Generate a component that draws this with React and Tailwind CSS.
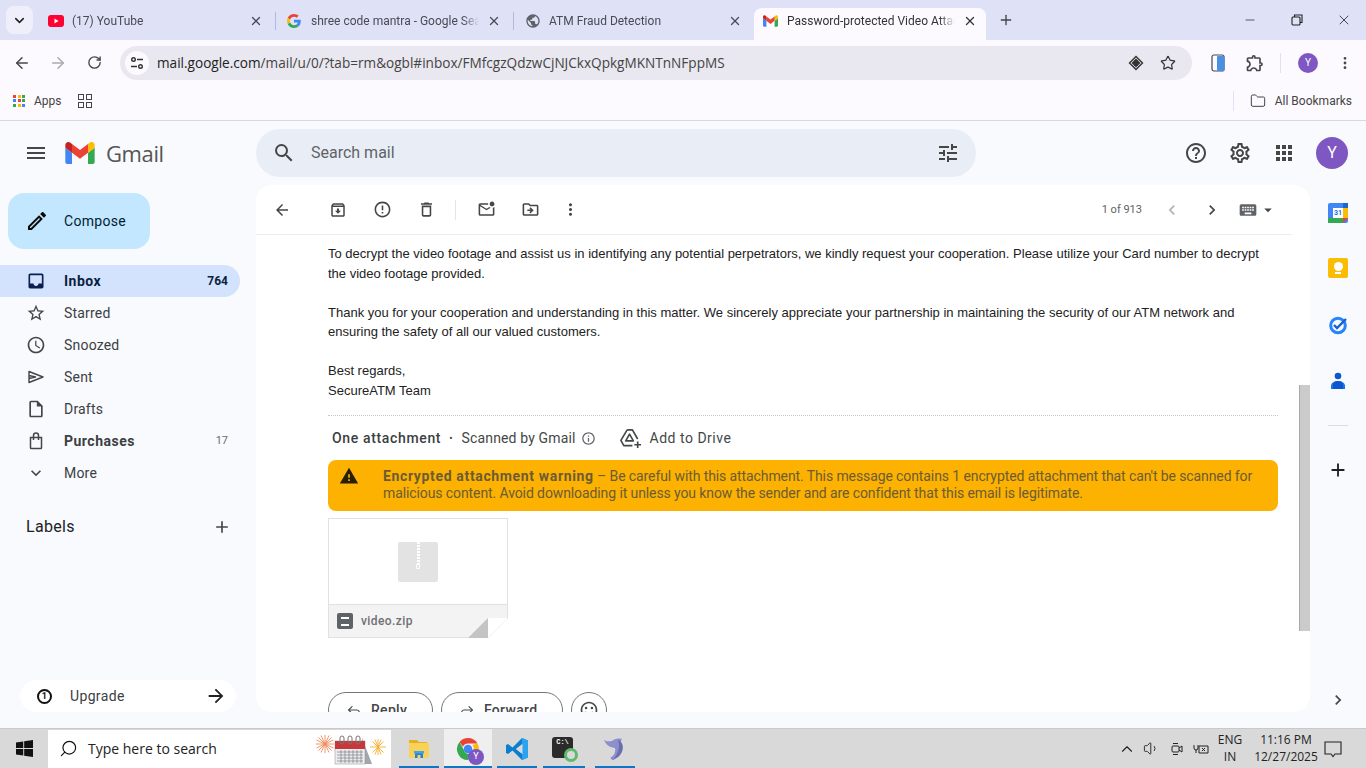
import React from 'react';
import { ChevronDown, X, Plus, ArrowLeft, ArrowRight, RotateCw, Star, MoreVertical, Minus, Folder, Search, ChevronUp, Volume1, Reply, Forward } from 'lucide-react';
import {
  MdMenu, MdSearch, MdTune, MdHelpOutline, MdOutlineSettings, MdApps, MdOutlineCreate, MdInbox, MdStarBorder,
  MdOutlineSchedule, MdOutlineInsertDriveFile, MdExpandMore, MdAdd, MdArrowForward, MdArrowBack,
  MdOutlineArchive, MdErrorOutline, MdOutlineDelete, MdOutlineMarkEmailUnread, MdOutlineDriveFileMove, MdMoreVert,
  MdChevronLeft, MdChevronRight, MdKeyboard, MdArrowDropDown, MdInfoOutline, MdWarning,
  MdOutlineSentimentSatisfied, MdPublic, MdOutlineExtension,
} from 'react-icons/md';

const GmailLogo = ({ className }) => (
  <svg viewBox="52 42 88 66" className={className}>
    <path fill="#4285f4" d="M58 108h14V74L52 59v43c0 3.32 2.69 6 6 6" />
    <path fill="#34a853" d="M120 108h14c3.32 0 6-2.69 6-6V59l-20 15" />
    <path fill="#fbbc04" d="M120 48v26l20-15v-8c0-7.42-8.47-11.65-14.4-7.2" />
    <path fill="#ea4335" d="M72 74V48l24 18 24-18v26L96 92" />
    <path fill="#c5221f" d="M52 51v8l20 15V48l-5.6-4.2c-5.94-4.45-14.4-.22-14.4 7.2" />
  </svg>
);

const GoogleG = () => (
  <svg viewBox="0 0 48 48" className="h-[14px] w-[14px]">
    <path fill="#EA4335" d="M24 9.5c3.54 0 6.71 1.22 9.21 3.6l6.85-6.85C35.9 2.38 30.47 0 24 0 14.62 0 6.51 5.38 2.56 13.22l7.98 6.19C12.43 13.72 17.74 9.5 24 9.5z" />
    <path fill="#4285F4" d="M46.98 24.55c0-1.57-.15-3.09-.38-4.55H24v9.02h12.94c-.58 2.96-2.26 5.48-4.78 7.18l7.73 6c4.51-4.18 7.09-10.36 7.09-17.65z" />
    <path fill="#FBBC05" d="M10.53 28.59c-.48-1.45-.76-2.99-.76-4.59s.27-3.14.76-4.59l-7.98-6.19C.92 16.46 0 20.12 0 24c0 3.88.92 7.54 2.56 10.78l7.97-6.19z" />
    <path fill="#34A853" d="M24 48c6.48 0 11.93-2.13 15.89-5.81l-7.73-6c-2.15 1.45-4.92 2.3-8.16 2.3-6.26 0-11.57-4.22-13.47-9.91l-7.98 6.19C6.51 42.62 14.62 48 24 48z" />
  </svg>
);

const YoutubeIcon = () => (
  <svg viewBox="0 0 16 16" className="h-4 w-4">
    <rect x="0" y="2" width="16" height="12" rx="3" fill="#ff0033" />
    <path d="M6.5 5.5v5l4-2.500z" fill="#fff" />
  </svg>
);

const ChromeTab = ({ icon, title, width, active, sep }) => (
  <div className={`relative flex h-8 shrink-0 items-center pb-[7px] ${width} ${active ? 'rounded-t-lg bg-[#fcfaff] pl-[9px] pr-[9px] text-[#333]' : 'pl-3 pr-3 text-[#4a4a55]'}`}>
    <span className="flex w-[24px] shrink-0 items-center">{icon}</span>
    <span className="flex-1 overflow-hidden whitespace-nowrap text-[12px] [mask-image:linear-gradient(to_left,transparent,black_16px)]">{title}</span>
    <X size={14} strokeWidth={2.2} className="ml-2 shrink-0" />
    {sep && <span className="absolute right-[-1px] top-1 h-[18px] w-px bg-[#b4b7e0]" />}
  </div>
);

const NavRow = ({ icon, label, count, active, bold, muted }) => (
  <div className={`flex h-8 w-[240px] items-center rounded-r-full pl-[26px] pr-3 text-[14px] ${active ? 'bg-[#d3e3fd] text-[#0b1f3f]' : 'text-[#3c4043]'}`}>
    <span className="flex w-[38px] shrink-0 items-center">{icon}</span>
    <span className={bold ? 'font-bold tracking-[0.5px]' : 'tracking-[0.2px]'}>{label}</span>
    <span className={`ml-auto ${muted ? 'text-[11px] text-[#6a6d70]' : 'text-[12px] font-bold'}`}>{count}</span>
  </div>
);

const ToolIcon = ({ children, className = '' }) => (
  <span className={`flex h-5 w-5 shrink-0 items-center justify-center text-[#444746] ${className}`}>{children}</span>
);

const WindowsLogo = () => (
  <svg viewBox="0 0 16 16" className="h-[17px] w-[17px]" fill="#111">
    <path d="M0 2.300 6.800 1.300V7.500H0zM7.700 1.200 16 0V7.500H7.700zM0 8.400H6.800V14.700L0 13.700zM7.700 8.400H16V16L7.700 14.800z" />
  </svg>
);

const BagIcon = () => (
  <svg viewBox="0 0 20 20" className="h-5 w-5" fill="none" stroke="#444746" strokeWidth="1.500">
    <path d="M4.500 6.500h11v10.200a.8.8 0 0 1-.8.8H5.300a.8.8 0 0 1-.8-.8z" />
    <path d="M7.500 9V4.500a2.500 2.500 0 0 1 5 0V9" />
  </svg>
);

const SentIcon = () => (
  <svg viewBox="0 0 20 20" className="h-5 w-5" fill="none" stroke="#444746" strokeWidth="1.400" strokeLinejoin="round">
    <path d="M3 4.500 17 10 3 15.500zM3 8.500 9.500 10 3 11.500" />
  </svg>
);

const DriveAddIcon = () => (
  <svg viewBox="0 0 24 24" className="ml-[23px] h-[23px] w-[23px] shrink-0" fill="none" stroke="#444746" strokeWidth="1.700" strokeLinejoin="round">
    <path d="M8.500 3h5.500l5.500 9.500M8.500 3 2 14l3 5.500h9" />
    <path d="M11 7.500 7 14.500h8z" />
    <path d="M19.500 15v7M16 18.500h7" />
  </svg>
);

const CalendarTask = () => (
  <svg viewBox="0 0 76 38" className="h-[38px] w-[76px]">
    <g stroke="#f08a5d" strokeWidth="0.9">
      <path d="M10 5v18M1 14h18M3.500 7.500l13 13M16.500 7.500l-13 13M6 5.500l8 17M14 5.500l-8 17M1.500 10l17 8M18.500 10l-17 8" />
    </g>
    <g stroke="#f5b030" strokeWidth="0.9">
      <path d="M63 9v16M55 17h16M57.500 11.500l11 11M68.500 11.500l-11 11M60 9.500l6 15M66 9.500l-6 15" />
    </g>
    <path d="M47 8l10 26H45z" fill="#a4a6ad" />
    <rect x="20" y="11" width="30" height="23" fill="#ecedf0" stroke="#8f9095" strokeWidth="0.5" />
    <rect x="20" y="11" width="30" height="8" fill="#c8383a" />
    <path d="M22 22h26M22 25h26M22 28h26M22 31h26M26 20v13M30 20v13M34 20v13M38 20v13M42 20v13M46 20v13" stroke="#6e6f75" strokeWidth="0.6" />
    <g fill="none" stroke="#777" strokeWidth="1">
      <rect x="25" y="6" width="4" height="8" rx="2" /><rect x="33" y="6" width="4" height="8" rx="2" /><rect x="41" y="6" width="4" height="8" rx="2" />
    </g>
  </svg>
);

const ExplorerIcon = () => (
  <svg viewBox="0 0 24 24" className="h-6 w-6">
    <path d="M2 3h8l2 2h8v4H2z" fill="#e8b021" />
    <rect x="2" y="6" width="20" height="15" fill="#f9d25c" />
    <path d="M8 21v-6h8v6h-2.500v-3h-3v3z" fill="#2c7fd0" />
    <rect x="7" y="14" width="10" height="2.500" fill="#3fa4e8" />
  </svg>
);

const ChromeIcon = () => (
  <span className="relative flex h-6 w-6 items-center justify-center">
    <svg viewBox="0 0 24 24" className="h-6 w-6">
      <path d="M12 1a11 11 0 0 1 9.500 5.500H12a5.500 5.500 0 0 0-5 3.200L3.500 5A11 11 0 0 1 12 1z" fill="#ea4335" />
      <path d="M21.500 6.500A11 11 0 0 1 12 23l4.700-8.200A5.500 5.500 0 0 0 16.500 8z" fill="#fbbc04" />
      <path d="M12 23A11 11 0 0 1 3.500 5l4.700 8.500a5.500 5.500 0 0 0 6 3.500z" fill="#34a853" />
      <circle cx="12" cy="12" r="4.200" fill="#4285f4" />
    </svg>
    <span className="absolute bottom-[-4px] right-[-4px] flex h-4 w-4 items-center justify-center rounded-full bg-[#7e57c2] text-[9px] text-white">Y</span>
  </span>
);

const VsCodeIcon = () => (
  <svg viewBox="0 0 24 24" className="h-6 w-6">
    <path d="M17 1 7.500 10.500 3 7 1 8v8l2 1 4.500-3.500L17 23l6-2.500v-17zM17.500 7v10L11 12z" fill="#0a7fd0" />
    <path d="M17 1l6 2.500v17L17 23z" fill="#2ba3ee" />
    <path d="M17.500 7v10L11 12z" fill="#d9d9d9" />
  </svg>
);

const CmdIcon = () => (
  <span className="relative flex h-6 w-6">
    <span className="flex h-[21px] w-[21px] items-start justify-center rounded-[3px] bg-[#2b2b2b] pt-[2px] font-['Liberation_Mono',monospace] text-[7px] font-bold leading-none text-white">C:\</span>
    <span className="absolute bottom-[-1px] right-[-2px] h-[14px] w-[14px] rounded-full border-[3px] border-[#5fba6a] bg-[#d9d9d9]" />
  </span>
);

const DolphinIcon = () => (
  <svg viewBox="0 0 24 24" className="h-6 w-6">
    <path d="M1 3c3 2 5 1 8 1 2-2 6-3 10-2-1 1-1 2-1 3 3 4 2 11-3 15l-5 3c-1 0-3-1-2-3 3-1 5-5 4-9-4-1-8-1-11-8z" fill="#8c8fc9" />
    <path d="M15 3c1 0 2 1 3 2 3 4 2 11-3 15l-5 3c4-5 8-12 5-20z" fill="#6a6eb0" />
  </svg>
);

function TaskIcon({ children, bar, active }) {
  return (
    <div className={`relative flex h-10 items-center justify-center ${bar} ${active ? 'bg-[#efefef]' : ''}`}>
      {children}
      <span className="absolute bottom-0 left-0 right-0 h-[3px] bg-[#0a78c8]" />
    </div>
  );
}

function Sidebar() {
  return (
    <aside className="flex w-[256px] shrink-0 flex-col">
      <div className="flex h-[64px] items-center pl-[24px]">
        <MdMenu size={24} className="text-[#444746]" />
        <GmailLogo className="ml-[17px] h-[22px] w-[30px]" />
        <span className="ml-[11px] font-['Open_Sans',sans-serif] text-[22px] leading-none tracking-[-0.4px] text-[#555]">Gmail</span>
      </div>
      <div className="ml-2 mt-2 flex h-14 w-[142px] items-center rounded-2xl bg-[#c2e7ff] pl-[17px] text-[14px] tracking-[0.3px] text-[#001d35]">
        <MdOutlineCreate size={24} className="text-[#0a0a0a]" />
        <span className="ml-[15px]">Compose</span>
      </div>
      <div className="mt-4 flex flex-col">
        <NavRow active bold label="Inbox" count="764" icon={<MdInbox size={20} className="text-[#0b1f4f]" />} />
        <NavRow label="Starred" icon={<MdStarBorder size={20} className="text-[#444746]" />} />
        <NavRow label="Snoozed" icon={<MdOutlineSchedule size={20} className="text-[#444746]" />} />
        <NavRow label="Sent" icon={<SentIcon />} />
        <NavRow label="Drafts" icon={<MdOutlineInsertDriveFile size={20} className="text-[#444746]" />} />
        <NavRow bold muted label="Purchases" count="17" icon={<BagIcon />} />
        <NavRow label="More" icon={<MdExpandMore size={20} className="text-[#444746]" />} />
      </div>
      <div className="mt-[22px] flex h-8 w-[240px] items-center justify-between pl-[26px] pr-[8px]">
        <span className="text-[16px] tracking-[0.3px] text-[#202124]">Labels</span>
        <MdAdd size={20} className="text-[#444746]" />
      </div>
      <div className="mb-4 ml-5 mt-auto flex h-8 w-[216px] items-center rounded-full bg-white pl-[17px] pr-[9px] text-[14px] tracking-[0.35px] text-[#3c4043]">
        <span className="flex h-[15px] w-[15px] items-center justify-center rounded-full border-2 border-[#111] text-[9px] font-bold leading-none text-[#111]">1</span>
        <span className="ml-[18px]">Upgrade</span>
        <MdArrowForward size={22} className="ml-auto text-[#222]" />
      </div>
    </aside>
  );
}

function MailCard() {
  return (
    <main className="relative mb-4 flex h-[527px] w-[1054px] shrink-0 flex-col overflow-hidden rounded-2xl bg-white">
      <div className="mr-[18px] flex h-[50px] shrink-0 items-center border-b border-[#eceded] pl-4 text-[#444746]">
        <ToolIcon><MdArrowBack size={18} /></ToolIcon>
        <ToolIcon className="ml-[36px]"><MdOutlineArchive size={18} /></ToolIcon>
        <ToolIcon className="ml-6"><MdErrorOutline size={19} /></ToolIcon>
        <ToolIcon className="ml-6"><MdOutlineDelete size={19} /></ToolIcon>
        <span className="ml-[19px] h-5 w-px bg-[#e4e5e5]" />
        <ToolIcon className="ml-[20px]"><MdOutlineMarkEmailUnread size={19} /></ToolIcon>
        <ToolIcon className="ml-6"><MdOutlineDriveFileMove size={19} /></ToolIcon>
        <ToolIcon className="ml-5"><MdMoreVert size={19} /></ToolIcon>
        <span className="ml-auto pt-[1px] text-[11px] text-[#5f6368]">1 of 913</span>
        <MdChevronLeft size={20} className="ml-5 text-[#b0b2b4]" />
        <MdChevronRight size={20} className="ml-5 text-[#444746]" />
        <MdKeyboard size={20} className="ml-4 text-[#5f6368]" />
        <MdArrowDropDown size={18} className="ml-[1px] mr-[15px] text-[#444746]" />
      </div>
      <div className="mr-[32px] min-h-0 flex-1 overflow-hidden pl-[72px] pt-[9px]">
        <div className="font-['Liberation_Sans',sans-serif] text-[13px] leading-[19.5px] text-[#222]">
          <p>To decrypt the video footage and assist us in identifying any potential perpetrators, we kindly request your cooperation. Please utilize your Card number to decrypt<br />the video footage provided.</p>
          <p className="mt-[19.5px]">Thank you for your cooperation and understanding in this matter. We sincerely appreciate your partnership in maintaining the security of our ATM network and<br />ensuring the safety of all our valued customers.</p>
          <p className="mt-[19.5px]">Best regards,<br />SecureATM Team</p>
        </div>
        <div className="mt-[15px] border-t border-dotted border-[#c4c7c5] pl-1 pt-[12px]">
          <div className="flex h-5 items-center text-[14px] text-[#444746]">
            <span className="font-medium tracking-[0.65px] text-[#3c4043]">One attachment</span>
            <span className="ml-[8px] mr-[9px] text-[10px]">•</span>
            <span className="tracking-[0.15px]">Scanned by Gmail</span>
            <MdInfoOutline size={15} className="ml-[5px] text-[#5f6368]" />
            <DriveAddIcon />
            <span className="ml-[8px] tracking-[0.5px]">Add to Drive</span>
          </div>
        </div>
        <div className="mt-[12px] flex h-[51px] items-center rounded-lg bg-[#fdb100] pb-[2px] pl-[11px] text-[14px] leading-[17px] tracking-[-0.1px] text-[#6b5c36]">
          <MdWarning size={20} className="mt-[6px] shrink-0 self-start text-[#2a1e00]" />
          <p className="ml-[24px]"><span className="font-bold tracking-[0.65px]">Encrypted attachment warning</span> – Be careful with this attachment. This message contains 1 encrypted attachment that can't be scanned for<br />malicious content. Avoid downloading it unless you know the sender and are confident that this email is legitimate.</p>
        </div>
        <div className="relative mt-[7px] flex h-[120px] w-[180px] flex-col border border-[#e1e1e1]">
          <div className="flex flex-1 items-center justify-center bg-white">
            <div className="flex h-10 w-10 flex-col items-center rounded-[2px] bg-[#e3e3e3]">
              <span className="h-[22px] w-[3px] bg-[repeating-linear-gradient(to_bottom,#fff_0,#fff_2px,transparent_2px,transparent_3px)]" />
              <span className="h-[5px] w-[4px] rounded-[1px] border border-white" />
            </div>
          </div>
          <div className="flex h-[33px] items-center border-t border-[#e1e1e1] bg-[#f3f3f3] pl-2">
            <span className="flex h-4 w-4 items-center justify-center rounded-[2px] bg-[#5f6368]">
              <span className="h-[9px] w-2 border-y-2 border-white" />
            </span>
            <span className="ml-2 text-[12px] font-medium tracking-[0.4px] text-[#6f7175]">video.zip</span>
          </div>
          <svg viewBox="0 0 40 20" className="absolute bottom-[-1px] right-[-1px] h-5 w-10">
            <path d="M0 20 20 0V20z" fill="#c4c4c4" />
            <path d="M20 0H40V20H20z" fill="#fff" />
            <path d="M40 0 20 20" stroke="#ececec" strokeWidth="0.7" />
          </svg>
        </div>
        <div className="mt-[54px] flex gap-2">
          <div className="flex h-9 w-[105px] items-center gap-[9px] rounded-full border border-[#747775] pl-[17px] text-[14px] font-medium tracking-[0.3px] text-[#444746]"><Reply size={16} strokeWidth={1.6} />Reply</div>
          <div className="flex h-9 w-[122px] items-center gap-[9px] rounded-full border border-[#747775] pl-[17px] text-[14px] font-medium tracking-[0.3px] text-[#444746]"><Forward size={16} strokeWidth={1.6} />Forward</div>
          <div className="flex h-9 w-9 items-center justify-center rounded-full border border-[#747775] text-[#444746]"><MdOutlineSentimentSatisfied size={20} /></div>
        </div>
      </div>
      {/* scrollbar thumb sits over the mail body */}
      <div className="absolute right-0 top-[200px] h-[246px] w-[11px] border-l border-[#a8a8a8] bg-[#cbcbcb]" />
    </main>
  );
}

function RightRail() {
  return (
    <aside className="flex w-[56px] shrink-0 flex-col items-center pb-[18px] pt-[18px]">
      <div className="relative h-5 w-5">
        <svg viewBox="0 0 20 20" className="h-5 w-5">
          <rect width="20" height="20" rx="2" fill="#4285f4" />
          <rect x="15" y="0" width="5" height="5" fill="#1967d2" />
          <rect x="15" y="5" width="5" height="10" fill="#fbbc04" />
          <rect x="0" y="15" width="15" height="5" fill="#34a853" />
          <path d="M15 15h5l-5 5z" fill="#ea4335" />
          <rect x="5" y="5" width="10" height="10" fill="#fff" />
        </svg>
        <span className="absolute inset-x-0 top-[5px] text-center text-[7px] font-bold leading-[10px] text-[#1a73e8]">31</span>
      </div>
      <div className="mt-[35px] flex h-5 w-5 flex-col items-center justify-center rounded-[2px] bg-[#fbbc04]">
        <span className="h-[9px] w-[9px] rounded-full bg-white" />
        <span className="mt-[1px] h-[2px] w-[6px] bg-white" />
      </div>
      <svg viewBox="0 0 20 20" className="mt-[37px] h-5 w-5">
        <circle cx="10" cy="10.500" r="7.300" fill="none" stroke="#2684fc" strokeWidth="3" />
        <path d="M6 10l3 3 9-9" fill="none" stroke="#1a5fd0" strokeWidth="2.400" />
      </svg>
      <svg viewBox="0 0 20 20" className="mt-[36px] h-5 w-5">
        <circle cx="10" cy="5" r="3.300" fill="#0b57d0" />
        <path d="M3 18v-3c0-3 3-5 7-5s7 2 7 5v3z" fill="#1a73e8" />
        <path d="M5 18v-4c0-2 2-4 5-4s5 2 5 4v4z" fill="#0b57d0" />
      </svg>
      <span className="mt-[34px] h-px w-5 bg-[#dadce0]" />
      <MdAdd size={22} className="mt-[33px] text-[#1f1f1f]" />
      <MdChevronRight size={20} className="mt-auto text-[#444746]" />
    </aside>
  );
}

function Taskbar() {
  return (
    <footer className="flex h-10 shrink-0 items-center border-t border-[#c9c9c9] bg-[#d9d9d9] text-[#222]">
      <div className="flex h-10 w-[48px] items-center justify-center"><WindowsLogo /></div>
      <div className="flex h-[38px] w-[343px] items-center bg-white pl-[11px]">
        <Search size={19} strokeWidth={1.5} className="-scale-x-100 text-[#111]" />
        <span className="ml-[10px] font-['Open_Sans',sans-serif] text-[14px] text-[#222]">Type here to search</span>
        <span className="ml-auto"><CalendarTask /></span>
      </div>
      <div className="ml-2 flex items-center">
        <TaskIcon bar="w-[40px]"><ExplorerIcon /></TaskIcon>
        <TaskIcon active bar="ml-[5px] w-[48px]"><ChromeIcon /></TaskIcon>
        <TaskIcon bar="ml-[5px] w-[40px]"><VsCodeIcon /></TaskIcon>
        <TaskIcon bar="ml-[6px] w-[42px]"><CmdIcon /></TaskIcon>
        <TaskIcon bar="ml-[10px] w-[40px]"><DolphinIcon /></TaskIcon>
      </div>
      <div className="ml-auto flex items-center font-['Open_Sans',sans-serif] text-[12px] leading-[17px] text-[#222]">
        <ChevronUp size={18} strokeWidth={1.5} />
        <Volume1 size={17} strokeWidth={1.3} className="ml-[7px]" />
        <svg viewBox="0 0 16 16" className="ml-[9px] h-4 w-4" fill="none" stroke="#222" strokeWidth="1">
          <rect x="3" y="5" width="7" height="6" rx="1" /><path d="M10 7l3-2v6l-3-2M4 2.500h5M4 13.500h5" />
        </svg>
        <svg viewBox="0 0 16 16" className="ml-[8px] h-4 w-4" fill="none" stroke="#222" strokeWidth="1">
          <path d="M1 4v3a2 2 0 0 0 4 0V4M3 9v3M6 5h9v7H6zM9 7l3 3M12 7l-3 3" />
        </svg>
        <div className="mb-[2px] ml-[5px] flex w-[32px] flex-col items-center"><span>ENG</span><span>IN</span></div>
        <div className="mb-[2px] ml-[5px] flex w-[70px] flex-col items-center"><span>11:16 PM</span><span>12/27/2025</span></div>
        <svg viewBox="0 0 18 18" className="ml-[3px] mr-[24px] h-[18px] w-[18px]" fill="none" stroke="#222" strokeWidth="1.100">
          <path d="M1 2h16v12H11l-2 2.500L7 14H1z" />
        </svg>
      </div>
    </footer>
  );
}

export default function App() {
  return (
    <div className="flex h-[768px] w-[1366px] flex-col overflow-hidden bg-[#f8fafd] font-['Roboto',sans-serif]">
      {/* tab strip */}
      <div className="flex h-10 shrink-0 items-end bg-[#dfe1f7] pl-[6px]">
        <div className="mr-[3px] flex h-7 w-[27px] items-center justify-center self-center rounded-lg bg-[#eeeffb]">
          <ChevronDown size={15} strokeWidth={2.5} className="text-[#222]" />
        </div>
        <ChromeTab width="w-[239px]" sep title="(17) YouTube" icon={<YoutubeIcon />} />
        <ChromeTab width="w-[238px]" sep title="shree code mantra - Google Search" icon={<GoogleG />} />
        <ChromeTab width="w-[241px]" title="ATM Fraud Detection" icon={<MdPublic size={16} className="text-[#5f6368]" />} />
        <ChromeTab width="w-[232px]" active title="Password-protected Video Attachment" icon={<GmailLogo className="h-[12px] w-[15px]" />} />
        <Plus size={16} strokeWidth={2} className="mb-[12px] ml-[12px] text-[#444]" />
        <div className="mb-[12px] ml-auto flex items-center text-[#222]">
          <Minus size={14} strokeWidth={1.2} />
          <svg viewBox="0 0 12 12" className="ml-[34px] h-3 w-3" fill="none" stroke="#222" strokeWidth="1.100">
            <rect x="1" y="3" width="8" height="8" rx="1" /><path d="M3.500 3V1h7.500v7.500H9" />
          </svg>
          <X size={16} strokeWidth={1.2} className="ml-[33px] mr-[14px]" />
        </div>
      </div>
      {/* toolbar */}
      <div className="flex h-[45px] shrink-0 items-center bg-[#fcfaff] pl-[13px] pr-[12px] text-[#47464f]">
        <ArrowLeft size={18} strokeWidth={2} />
        <ArrowRight size={18} strokeWidth={2} className="ml-[18px] text-[#a9a9b0]" />
        <RotateCw size={15} strokeWidth={2.2} className="ml-[20px]" />
        <div className="ml-[18px] flex h-[34px] w-[1072px] items-center rounded-full bg-[#e9e8f0] pl-[5px] pr-[16px]">
          <span className="flex h-6 w-6 items-center justify-center rounded-full bg-[#fcfaff]">
            <svg viewBox="0 0 16 16" className="h-4 w-4" fill="none" stroke="#333" strokeWidth="1.400">
              <circle cx="4.500" cy="4.500" r="1.800" /><path d="M8 4.500h6M2 11.500h6" /><circle cx="11.500" cy="11.500" r="1.800" />
            </svg>
          </span>
          <span className="ml-[8px] pt-[1px] font-['Open_Sans',sans-serif] text-[13.6px] text-[#222]">mail.google.com<span className="text-[#444]">/mail/u/0/?tab=rm&amp;ogbl#inbox/FMfcgzQdzwCjNJCkxQpkgMKNTnNFppMS</span></span>
          <svg viewBox="0 0 16 16" className="ml-auto h-4 w-4" fill="none" stroke="#333" strokeWidth="1.400">
            <path d="M8 1.500 14.500 8 8 14.500 1.500 8z" /><path d="M8 4.500 11.500 8 8 11.500 4.500 8z" fill="#333" />
          </svg>
          <Star size={16} strokeWidth={1.8} className="ml-[16px] text-[#333]" />
        </div>
        <svg viewBox="0 0 16 18" className="ml-[18px] h-[18px] w-4">
          <rect x="2" y="1" width="12" height="16" rx="2" fill="none" stroke="#47464f" strokeWidth="1.200" />
          <rect x="7" y="2" width="7.500" height="15" rx="1" fill="#4a90e2" />
        </svg>
        <MdOutlineExtension size={20} className="ml-[19px]" />
        <span className="ml-[15px] h-5 w-px bg-[#dfe1f7]" />
        <span className="ml-[17px] flex h-5 w-5 items-center justify-center rounded-full bg-[#7e57c2] text-[10px] text-white">Y</span>
        <MoreVertical size={16} strokeWidth={2.2} className="ml-[19px]" />
      </div>
      {/* bookmarks bar */}
      <div className="flex h-9 shrink-0 items-center border-b border-[#d9d9e3] bg-[#fcfaff] pb-[4px] pl-[13px] pr-[14px] text-[12px] text-[#444]">
        <span className="grid h-3 w-3 grid-cols-3 gap-[1.500px]">
          <i className="bg-[#ea4335]" /><i className="bg-[#fbbc04]" /><i className="bg-[#34a853]" />
          <i className="bg-[#4285f4]" /><i className="bg-[#ea4335]" /><i className="bg-[#34a853]" />
          <i className="bg-[#34a853]" /><i className="bg-[#fbbc04]" /><i className="bg-[#4285f4]" />
        </span>
        <span className="ml-[9px]">Apps</span>
        <span className="ml-[16px] grid h-[14px] w-[14px] grid-cols-2 gap-[2px]">
          <i className="border border-[#444]" /><i className="border border-[#444]" /><i className="border border-[#444]" /><i className="border border-[#444]" />
        </span>
        <span className="ml-auto h-5 w-px bg-[#dfe1f7]" />
        <Folder size={16} strokeWidth={1.5} className="ml-[16px]" />
        <span className="ml-[9px]">All Bookmarks</span>
      </div>
      {/* gmail */}
      <div className="flex min-h-0 flex-1">
        <Sidebar />
        <div className="flex min-w-0 flex-1 flex-col">
          <div className="flex h-[64px] shrink-0 items-center pr-[18px]">
            <div className="flex h-12 w-[720px] items-center rounded-full bg-[#e9eef6] pl-[16px] pr-[16px]">
              <MdSearch size={24} className="text-[#444746]" />
              <span className="ml-[15px] text-[16px] text-[#5f6368]">Search mail</span>
              <MdTune size={24} className="ml-auto text-[#444746]" />
            </div>
            <MdHelpOutline size={24} className="ml-auto text-[#444746]" />
            <MdOutlineSettings size={24} className="ml-[20px] text-[#444746]" />
            <MdApps size={24} className="ml-[20px] text-[#444746]" />
            <span className="ml-[20px] flex h-8 w-8 items-center justify-center rounded-full bg-[#7e57c2] text-[16px] text-white">Y</span>
          </div>
          <div className="flex min-h-0 flex-1">
            <MailCard />
            <RightRail />
          </div>
        </div>
      </div>
      <Taskbar />
    </div>
  );
}
